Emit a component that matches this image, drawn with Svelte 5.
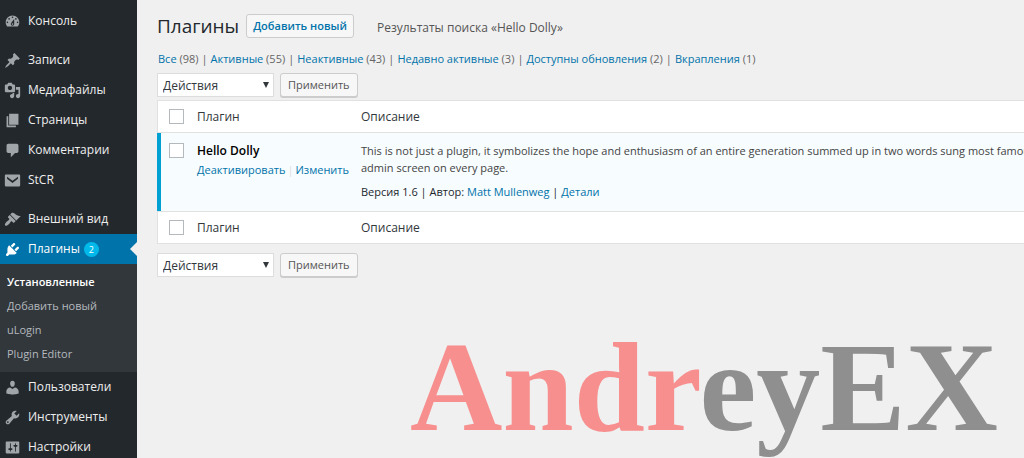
<script lang="ts">
  type MenuItem = {
    label: string;
    icon: string;
    badge?: number;
    current?: boolean;
    spaced?: boolean;
    children?: string[];
  };

  const menu: MenuItem[] = [
    {
      label: 'Консоль',
      icon: 'M3.76 16h12.48c1.1-1.37 1.76-3.11 1.76-5 0-4.42-3.58-8-8-8s-8 3.58-8 8c0 1.89.66 3.63 1.76 5zM10 4c.55 0 1 .45 1 1s-.45 1-1 1-1-.45-1-1 .45-1 1-1zM6 6c.55 0 1 .45 1 1s-.45 1-1 1-1-.45-1-1 .45-1 1-1zm8 0c.55 0 1 .45 1 1s-.45 1-1 1-1-.45-1-1 .45-1 1-1zm-5.37 5.55L12 7v6c0 1.1-.9 2-2 2s-2-.9-2-2c0-.57.24-1.08.63-1.45zM4 10c.55 0 1 .45 1 1s-.45 1-1 1-1-.45-1-1 .45-1 1-1zm12 0c.55 0 1 .45 1 1s-.45 1-1 1-1-.45-1-1 .45-1 1-1zm-5 3c0-.55-.45-1-1-1s-1 .45-1 1 .45 1 1 1 1-.45 1-1z'
    },
    {
      label: 'Записи',
      spaced: true,
      icon: 'M10.44 3.02l1.82-1.82 6.36 6.35-1.83 1.82c-1.05-.68-2.48-.57-3.41.36l-.75.75c-.92.93-1.04 2.35-.35 3.41l-1.83 1.82-2.41-2.41-2.8 2.79c-.42.42-3.38 2.71-3.8 2.29s1.86-3.39 2.28-3.81l2.79-2.79L4.1 9.36l1.83-1.82c1.05.69 2.48.57 3.4-.36l.75-.75c.93-.92 1.05-2.35.36-3.41z'
    },
    {
      label: 'Медиафайлы',
      icon: 'M13 11V4c0-.55-.45-1-1-1h-1.67L9 1H5L3.67 3H2c-.55 0-1 .45-1 1v7c0 .55.45 1 1 1h10c.55 0 1-.45 1-1zM7 4.5c1.38 0 2.5 1.12 2.5 2.5S8.38 9.5 7 9.5 4.5 8.38 4.5 7 5.62 4.5 7 4.5zM14 6h5v10.5c0 1.38-1.12 2.5-2.5 2.5S14 17.88 14 16.5s1.12-2.5 2.5-2.5c.17 0 .34.02.5.05V9h-3V6zm-4 8.05V13h2v3.5c0 1.38-1.12 2.5-2.5 2.5S7 17.88 7 16.5 8.12 14 9.5 14c.17 0 .34.02.5.05z'
    },
    { label: 'Страницы', icon: 'M6 15V2h11v13H6zm-1 1h9v2H3V5h2v11z' },
    {
      label: 'Комментарии',
      icon: 'M5 2h10c1.1 0 2 .9 2 2v7c0 1.1-.9 2-2 2h-2l-5 5v-5H5c-1.1 0-2-.9-2-2V4c0-1.1.9-2 2-2z'
    },
    {
      label: 'StCR',
      icon: 'M2 3h16c.55 0 1 .45 1 1v12c0 .55-.45 1-1 1H2c-.55 0-1-.45-1-1V4c0-.55.45-1 1-1zm1.6 2.6v2.2l6.4 5 6.4-5V5.6L10 10.4z'
    },
    {
      label: 'Внешний вид',
      spaced: true,
      icon: 'M14.48 11.06L7.41 3.99l1.5-1.5c.5-.56 2.3-.47 3.51.32 1.21.8 1.43 1.28 2.91 2.1 1.18.64 2.45 1.26 4.45.85zm-.71.71L6.7 4.7 4.93 6.47c-.39.39-.39 1.02 0 1.41l1.06 1.06c.39.39.39 1.03 0 1.42-.6.6-1.43 1.11-2.21 1.69-.35.26-.7.53-1.01.84C1.43 14.23.4 16.08 1.4 17.07c.99 1 2.84-.03 4.18-1.36.31-.31.58-.66.85-1.02.57-.78 1.08-1.61 1.69-2.21.39-.39 1.02-.39 1.41 0l1.06 1.06c.39.39 1.02.39 1.41 0z'
    },
    {
      label: 'Плагины',
      badge: 2,
      current: true,
      icon: 'M13.11 4.36L9.87 7.6 8 5.73l3.24-3.24c.35-.34 1.05-.2 1.56.32.52.51.66 1.21.31 1.55zm-8 1.77l.91-1.12 9.01 9.01-1.19.84c-.71.71-2.63 1.16-3.82 1.16H6.14L4.9 17.26c-.59.59-1.54.59-2.12 0-.59-.58-.59-1.53 0-2.12l1.24-1.24v-3.88c0-1.13.4-3.19 1.09-3.89zm7.26 3.97l3.24-3.24c.34-.35 1.04-.21 1.55.31.52.51.66 1.21.31 1.55l-3.24 3.25z',
      children: ['Установленные', 'Добавить новый', 'uLogin', 'Plugin Editor']
    },
    {
      label: 'Пользователи',
      icon: 'M10 9.25c-2.27 0-2.73-3.44-2.73-3.44C7 4.02 7.82 2 9.97 2c2.16 0 2.98 2.02 2.71 3.81 0 0-.41 3.44-2.68 3.44zm0 2.57L12.72 10c2.39 0 4.52 2.33 4.52 4.53v2.49s-3.65 1.13-7.24 1.13c-3.65 0-7.24-1.13-7.24-1.13v-2.49c0-2.25 1.94-4.48 4.47-4.48z'
    },
    {
      label: 'Инструменты',
      icon: 'M16.68 9.77c-1.34 1.34-3.3 1.67-4.95.99l-5.41 6.52c-.99.99-2.59.99-3.58 0s-.99-2.59 0-3.57l6.52-5.42c-.68-1.65-.35-3.61.99-4.95 1.28-1.28 3.12-1.62 4.72-1.06l-2.89 2.89 2.82 2.82 2.86-2.87c.53 1.58.18 3.39-1.08 4.65zM3.81 16.21c.4.39 1.04.39 1.43 0 .4-.4.4-1.04 0-1.43-.39-.4-1.03-.4-1.43 0-.39.39-.39 1.03 0 1.43z'
    },
    {
      label: 'Настройки',
      icon: 'M18 16V4c0-.55-.45-1-1-1H3c-.55 0-1 .45-1 1v12c0 .55.45 1 1 1h14c.55 0 1-.45 1-1zM8 11h1c.55 0 1 .45 1 1s-.45 1-1 1H8v1.5c0 .28-.22.5-.5.5s-.5-.22-.5-.5V13H6c-.55 0-1-.45-1-1s.45-1 1-1h1V5.5c0-.28.22-.5.5-.5s.5.22.5.5V11zm5-2h-1c-.55 0-1-.45-1-1s.45-1 1-1h1V5.5c0-.28.22-.5.5-.5s.5.22.5.5V7h1c.55 0 1 .45 1 1s-.45 1-1 1h-1v5.5c0 .28-.22.5-.5.5s-.5-.22-.5-.5V9z'
    }
  ];

  const filters = [
    { label: 'Все', count: 98 },
    { label: 'Активные', count: 55 },
    { label: 'Неактивные', count: 43 },
    { label: 'Недавно активные', count: 3 },
    { label: 'Доступны обновления', count: 2 },
    { label: 'Вкрапления', count: 1 }
  ];

  let selected = $state(false);
</script>

{#snippet bulkActions()}
  <form class="bulk" onsubmit={(e) => e.preventDefault()}>
    <span class="select-wrap">
      <select aria-label="Действия">
        <option>Действия</option>
      </select>
    </span>
    <button class="btn" type="submit">Применить</button>
  </form>
{/snippet}

{#snippet headings()}
  <tr>
    <th class="check"><input type="checkbox" aria-label="Плагин" bind:checked={selected} /></th>
    <th class="name">Плагин</th>
    <th>Описание</th>
  </tr>
{/snippet}

<div class="admin">
  <nav class="sidebar">
    <ul class="menu">
      {#each menu as item (item.label)}
        <li class:spaced={item.spaced}>
          <a class="menu-link" class:current={item.current} href="#menu">
            <svg viewBox="0 0 20 20" aria-hidden="true"><path fill-rule="evenodd" d={item.icon} /></svg>
            <span>{item.label}</span>
            {#if item.badge}
              <span class="badge">{item.badge}</span>
            {/if}
          </a>
          {#if item.children}
            <ul class="submenu">
              {#each item.children as child, i (child)}
                <li><a href="#submenu" class:active={i === 0}>{child}</a></li>
              {/each}
            </ul>
          {/if}
        </li>
      {/each}
    </ul>
  </nav>

  <main class="content">
    <header class="heading">
      <h1>Плагины</h1>
      <button class="btn btn-add" type="button">Добавить новый</button>
      <span class="subtitle">Результаты поиска «Hello Dolly»</span>
    </header>

    <ul class="filters">
      {#each filters as f (f.label)}
        <li><a href="#filter">{f.label}</a> ({f.count})</li>
      {/each}
    </ul>

    {@render bulkActions()}

    <table class="plugins">
      <thead>{@render headings()}</thead>
      <tbody>
        <tr>
          <td class="check"><input type="checkbox" aria-label="Hello Dolly" bind:checked={selected} /></td>
          <td class="name">
            <strong>Hello Dolly</strong>
            <div class="row-actions">
              <a href="#deactivate">Деактивировать</a><i>|</i><a href="#edit">Изменить</a>
            </div>
          </td>
          <td class="desc">
            <p>
              This is not just a plugin, it symbolizes the hope and enthusiasm of an entire generation summed up in two words sung most famous<br />
              admin screen on every page.
            </p>
            <p class="meta">
              Версия 1.6 | Автор: <a href="#author">Matt Mullenweg</a> | <a href="#details">Детали</a>
            </p>
          </td>
        </tr>
      </tbody>
      <tfoot>{@render headings()}</tfoot>
    </table>

    {@render bulkActions()}

    <div class="watermark"><span>Andr</span>eyEX</div>
  </main>
</div>

<style>
  :global(body) {
    margin: 0;
    background: #f0f0f0;
    color: #444;
    font: 12px/18px 'Open Sans', 'Noto Sans', sans-serif;
    overflow-x: hidden;
  }

  ul { list-style: none; margin: 0; padding: 0; }
  a { color: #0073aa; text-decoration: none; }

  .admin {
    display: flex;
    min-height: 100vh;
  }

  .sidebar {
    flex: none;
    width: 137px;
    background: #23282d;
  }

  .menu { padding-top: 6px; }
  .spaced { margin-top: 9px; }

  .menu-link {
    position: relative;
    display: flex;
    align-items: center;
    height: 30px;
    padding-left: 4px;
    color: #eee;
  }

  .menu-link svg {
    width: 17px;
    height: 17px;
    margin-right: 7px;
    fill: #a0a5aa;
  }

  .menu-link.current { background: #0073aa; color: #fff; }
  .menu-link.current svg { fill: #fff; }

  .menu-link.current::after {
    content: '';
    position: absolute;
    right: 0;
    top: 8px;
    border: 7px solid transparent;
    border-left-width: 0;
    border-right-color: #f0f0f0;
  }

  .badge {
    width: 15px;
    margin-left: 4px;
    border-radius: 8px;
    background: #00b9eb;
    font-size: 9px;
    line-height: 15px;
    text-align: center;
  }

  .submenu {
    padding: 6px 0;
    background: #32373c;
  }

  .submenu a {
    display: block;
    padding-left: 7px;
    color: #b4b9be;
    font-size: 11px;
    line-height: 24px;
  }

  .submenu a.active { color: #fff; font-weight: 600; }

  .content {
    flex: 1;
    min-width: 0;
    padding: 13px 0 0 20px;
    overflow: hidden;
  }

  .heading {
    display: flex;
    align-items: center;
    height: 25px;
  }

  h1 {
    margin: 0 7px 0 0;
    color: #23282d;
    font-size: 19px;
    font-weight: 400;
  }

  .btn {
    box-sizing: border-box;
    height: 24px;
    padding: 0 7px;
    border: 1px solid #ccc;
    border-radius: 3px;
    background: #f7f7f7;
    box-shadow: 0 1px 0 #ccc;
    color: #555;
    font: inherit;
    font-size: 11px;
  }

  .btn-add {
    padding: 0 6px;
    box-shadow: none;
    color: #0073aa;
    font-weight: 600;
  }

  .subtitle { margin: 5px 0 0 23px; color: #555; }

  .filters {
    display: flex;
    margin: 12px 0 5px 1px;
    color: #666;
    font-size: 11px;
  }

  .filters li + li::before { content: '|'; margin: 0 3px; }

  .bulk { display: flex; gap: 6px; }
  .select-wrap { position: relative; }

  .select-wrap::after {
    content: '';
    position: absolute;
    right: 5px;
    top: 9px;
    border: 3px solid transparent;
    border-top: 6px solid #32373c;
    border-bottom: 0;
    pointer-events: none;
  }

  select {
    appearance: none;
    width: 117px;
    height: 24px;
    padding: 1px 5px 0;
    border: 1px solid #ddd;
    border-radius: 0;
    background: #fff;
    color: #32373c;
    font: inherit;
  }

  .plugins {
    table-layout: fixed;
    width: 100%;
    margin: 3px 0 9px;
    border: 1px solid #e1e1e1;
    border-width: 1px 0;
    border-spacing: 0;
    background: #fff;
  }

  .plugins th {
    height: 31px;
    padding: 0;
    color: #32373c;
    font-weight: 400;
    text-align: left;
  }

  .plugins td {
    height: 60px;
    padding: 9px 0;
    border: 1px solid #e1e1e1;
    border-width: 1px 0;
    background: #f7fcfe;
    vertical-align: top;
  }

  .plugins .check { width: 40px; }
  .plugins .name { width: 164px; }
  .plugins .desc { font-size: 11px; white-space: nowrap; }
  th.check { box-shadow: inset 1px 0 #e1e1e1; }
  td.check { box-shadow: inset 4px 0 #00a0d2; }

  input[type='checkbox'] {
    appearance: none;
    display: block;
    box-sizing: border-box;
    width: 15px;
    height: 15px;
    margin: 0 0 0 12px;
    border: 1px solid #b4b9be;
    background: #fff;
  }

  td input[type='checkbox'] { margin-top: 1px; }
  input[type='checkbox']:checked { background: #0073aa; }

  strong { color: #000; font-weight: 600; }
  .row-actions { font-size: 11px; line-height: 20px; white-space: nowrap; }
  .row-actions i { margin: 0 2px; color: #ddd; font-style: normal; }

  .desc p { margin: 0; line-height: 17px; }
  .desc .meta { margin-top: 7px; color: #23282d; }

  .watermark {
    margin: 50px 26px 0 0;
    color: #8f8f8f;
    font: bold 128px/120px 'Liberation Serif', serif;
    text-align: right;
  }

  .watermark span { color: #f78f8f; }
</style>
